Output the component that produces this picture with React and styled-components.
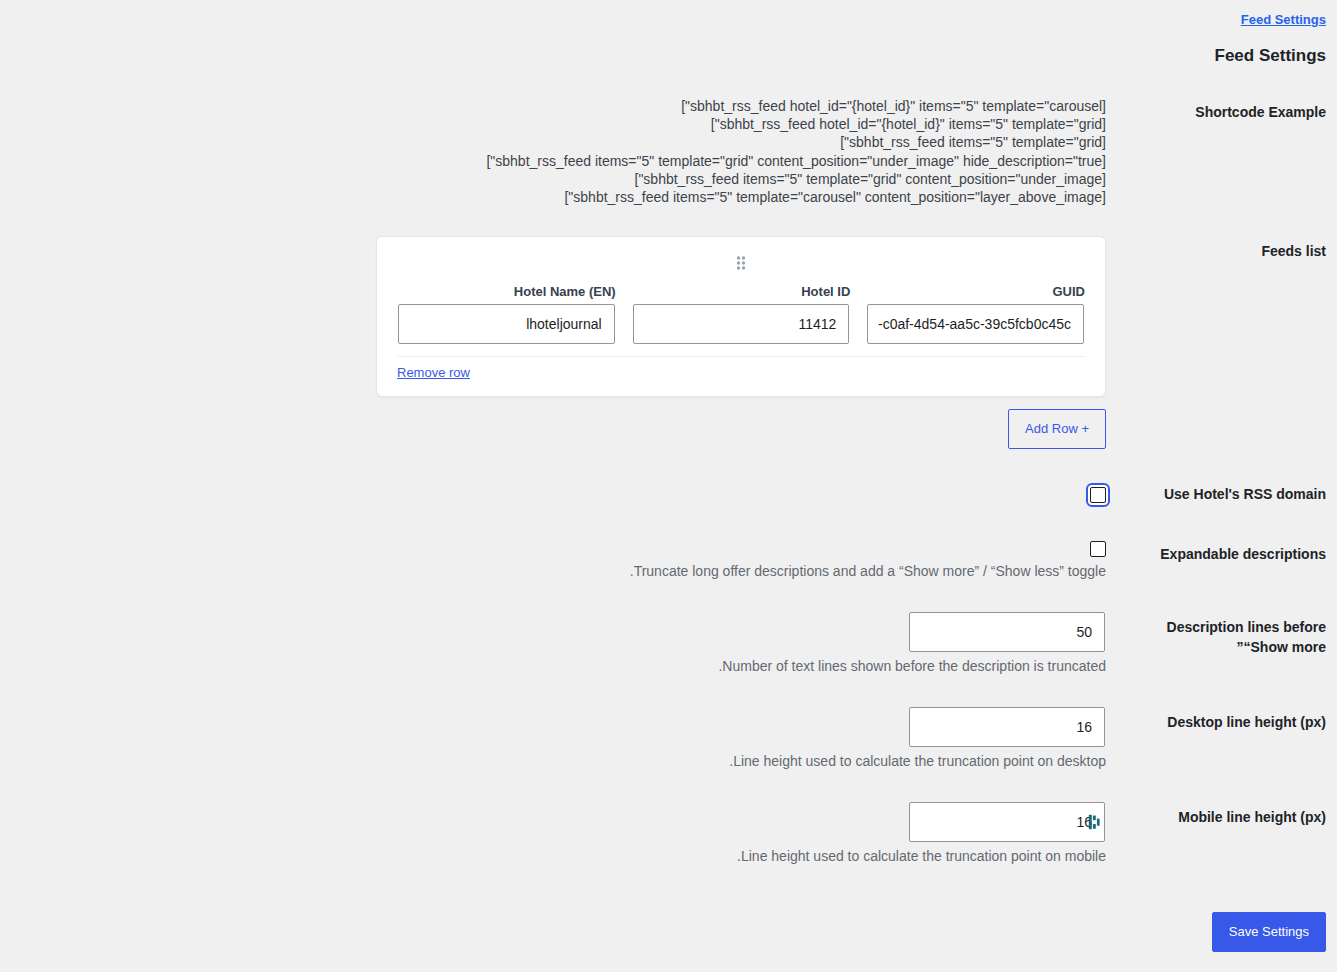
import React from "react"
import styled, { createGlobalStyle } from "styled-components"

const GlobalStyle = createGlobalStyle`
  body {
    margin: 0;
    background: #f0f0f0;
    color: #3c434a;
    font-family: "Liberation Sans", Arial, sans-serif;
    font-size: 14px;
  }

  * {
    box-sizing: border-box;
  }
`

const Wrapper = styled.main`
  padding: 10px 11px 20px;
`

const TabLink = styled.a`
  display: block;
  width: fit-content;
  color: #2563eb;
  font-size: 13px;
  font-weight: 700;
  line-height: 20px;
`

const Title = styled.h2`
  margin: 15px 0;
  color: #1d2327;
  font-size: 17px;
  line-height: 22px;
`

const Row = styled.div`
  display: grid;
  grid-template-columns: 210px minmax(0, 1fr);
`

const RowLabel = styled.label`
  padding: 20px 0 20px 10px;
  color: #1d2327;
  font-weight: 700;
  line-height: 20px;
`

const RowTitle = styled(RowLabel).attrs({ as: "div" })``

const RowContent = styled.div`
  padding: 15px 10px;
`

const Shortcodes = styled.div`
  line-height: 1.3;
`

const Card = styled.div`
  max-width: 730px;
  padding: 16px 20px 13px;
  border: 1px solid #e6e6e6;
  border-radius: 6px;
  background: #fff;
  box-shadow: 0 1px 2px hsla(0, 0%, 0%, 0.05);
`

const Handle = styled.button`
  display: block;
  height: 20px;
  margin: 0 auto 10px;
  padding: 0 5px;
  border: 0;
  background: none;
  color: #9ca3af;
  cursor: move;

  svg {
    display: block;
  }
`

const Fields = styled.div`
  display: grid;
  grid-template-columns: repeat(3, minmax(0, 1fr));
  gap: 16px;
  padding-bottom: 12px;
  border-bottom: 1px solid #f0f0f1;
`

const FieldLabel = styled.label`
  display: block;
  margin-bottom: 3px;
  color: #374151;
  font-size: 13px;
  font-weight: 700;
  line-height: 18px;
`

const Input = styled.input`
  display: block;
  width: ${props => (props.$small ? "196px" : "calc(100% - 2px)")};
  height: 40px;
  margin: 0 1px;
  padding: 0 12px 0 8px;
  border: 1px solid #949494;
  border-radius: 2px;
  background: #fff;
  color: #1e1e1e;
  font-family: inherit;
  font-size: 14px;
  text-align: right;
  appearance: textfield;

  &::-webkit-inner-spin-button {
    display: none;
  }
`

const CardFooter = styled.div`
  display: flex;
  justify-content: flex-end;
  padding-top: 6px;
`

const RemoveButton = styled.button`
  padding: 0;
  border: 0;
  background: none;
  color: #3858e9;
  font-family: inherit;
  font-size: 13px;
  line-height: 20px;
  text-decoration: underline;
`

const Button = styled.button`
  display: block;
  height: 40px;
  padding: 0 16px 2px;
  border: 1px solid #3858e9;
  border-radius: 2px;
  background: ${props => (props.$primary ? "#3858e9" : "transparent")};
  color: ${props => (props.$primary ? "#fff" : "#3858e9")};
  font-family: inherit;
  font-size: 13px;
`

const AddButton = styled(Button)`
  margin-top: 12px;
`

const SaveButton = styled(Button)`
  margin-top: 30px;
`

const CheckLine = styled.div`
  display: flex;
  align-items: flex-end;
  height: ${props => (props.$tall ? "24px" : "18px")};
`

const Checkbox = styled.input`
  width: 16px;
  height: 16px;
  margin: 0;
  border: 1px solid #1e1e1e;
  border-radius: 2px;
  background: #fff;
  appearance: none;

  &:focus {
    box-shadow: 0 0 0 2px #fff;
    outline: 2px solid #3858e9;
    outline-offset: 2px;
  }

  &:checked {
    background: #3858e9;
  }
`

const Description = styled.p`
  margin: 4px 0 0;
  color: #646970;
  line-height: 21px;
`

const InputWrap = styled.div`
  position: relative;
  width: fit-content;
`

const Badge = styled.svg`
  position: absolute;
  top: 12px;
  right: 6px;
`

const shortcodes = [
  '[sbhbt_rss_feed hotel_id="{hotel_id}" items="5" template="carousel"]',
  '[sbhbt_rss_feed hotel_id="{hotel_id}" items="5" template="grid"]',
  '[sbhbt_rss_feed items="5" template="grid"]',
  '[sbhbt_rss_feed items="5" template="grid" content_position="under_image" hide_description="true"]',
  '[sbhbt_rss_feed items="5" template="grid" content_position="under_image"]',
  '[sbhbt_rss_feed items="5" template="carousel" content_position="layer_above_image"]',
]

const numberFields = [
  {
    id: "lines",
    label: "Description lines before “Show more”",
    value: 50,
    help: "Number of text lines shown before the description is truncated.",
  },
  {
    id: "desktop-height",
    label: "Desktop line height (px)",
    value: 16,
    help: "Line height used to calculate the truncation point on desktop.",
  },
  {
    id: "mobile-height",
    label: "Mobile line height (px)",
    value: 16,
    help: "Line height used to calculate the truncation point on mobile.",
    badge: true,
  },
]

const DragDots = () => (
  <svg width="10" height="20" viewBox="0 0 10 20" fill="currentColor">
    {[5, 10, 15].map(y => (
      <React.Fragment key={y}>
        <circle cx="2.5" cy={y} r="1.7" />
        <circle cx="7.5" cy={y} r="1.7" />
      </React.Fragment>
    ))}
  </svg>
)

const BarsBadge = () => (
  <Badge width="12" height="16" viewBox="0 0 12 16" fill="#1c6b7c">
    <rect x="0.8" y="0.8" width="3" height="14.4" rx="0.6" />
    <rect x="4.9" y="1.4" width="2.9" height="4.8" rx="0.6" />
    <rect x="4.9" y="10" width="2.9" height="4.8" rx="0.6" />
    <rect x="8.9" y="4.4" width="2.7" height="7.4" rx="0.6" />
  </Badge>
)

class App extends React.Component {
  render() {
    return (
      <Wrapper dir="rtl">
        <GlobalStyle />
        <TabLink href="#feed-settings">Feed Settings</TabLink>
        <Title>Feed Settings</Title>

        <Row>
          <RowTitle>Shortcode Example</RowTitle>
          <RowContent>
            <Shortcodes>
              {shortcodes.map(code => (
                <div key={code}>{code}</div>
              ))}
            </Shortcodes>
          </RowContent>
        </Row>

        <Row>
          <RowTitle>Feeds list</RowTitle>
          <RowContent>
            <Card>
              <Handle type="button" aria-label="Drag row">
                <DragDots />
              </Handle>
              <Fields>
                <div>
                  <FieldLabel htmlFor="guid">GUID</FieldLabel>
                  <Input
                    id="guid"
                    dir="ltr"
                    defaultValue="-c0af-4d54-aa5c-39c5fcb0c45c"
                  />
                </div>
                <div>
                  <FieldLabel htmlFor="hotel-id">Hotel ID</FieldLabel>
                  <Input id="hotel-id" defaultValue="11412" />
                </div>
                <div>
                  <FieldLabel htmlFor="hotel-name">Hotel Name (EN)</FieldLabel>
                  <Input id="hotel-name" defaultValue="lhoteljournal" />
                </div>
              </Fields>
              <CardFooter>
                <RemoveButton type="button">Remove row</RemoveButton>
              </CardFooter>
            </Card>
            <AddButton type="button">+ Add Row</AddButton>
          </RowContent>
        </Row>

        <Row>
          <RowLabel htmlFor="rss-domain">Use Hotel's RSS domain</RowLabel>
          <RowContent>
            <CheckLine $tall>
              <Checkbox type="checkbox" id="rss-domain" autoFocus />
            </CheckLine>
          </RowContent>
        </Row>

        <Row>
          <RowLabel htmlFor="expandable">Expandable descriptions</RowLabel>
          <RowContent>
            <CheckLine>
              <Checkbox type="checkbox" id="expandable" />
            </CheckLine>
            <Description>
              Truncate long offer descriptions and add a “Show more” / “Show
              less” toggle.
            </Description>
          </RowContent>
        </Row>

        {numberFields.map(field => (
          <Row key={field.id}>
            <RowLabel htmlFor={field.id}>{field.label}</RowLabel>
            <RowContent>
              <InputWrap>
                <Input
                  $small
                  type="number"
                  id={field.id}
                  defaultValue={field.value}
                />
                {field.badge && <BarsBadge />}
              </InputWrap>
              <Description>{field.help}</Description>
            </RowContent>
          </Row>
        ))}

        <SaveButton type="submit" $primary>
          Save Settings
        </SaveButton>
      </Wrapper>
    )
  }
}

export default App
